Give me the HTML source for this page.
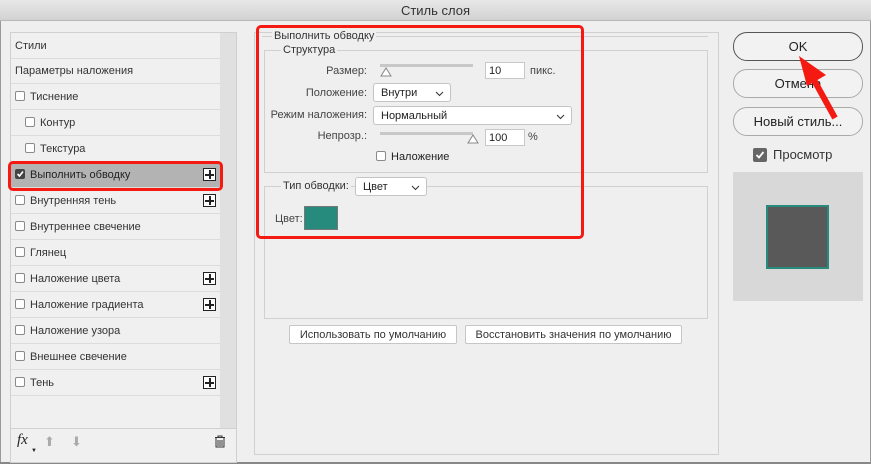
<!DOCTYPE html>
<html><head><meta charset="utf-8"><style>
*{box-sizing:border-box;margin:0;padding:0}
body{width:871px;height:464px;overflow:hidden;background:#efefef;font-family:"Liberation Sans",sans-serif;font-size:11px;color:#222;position:relative}
.a{position:absolute}
.title{left:0;top:0;width:871px;height:21px;background:linear-gradient(#e8e8e8,#d2d2d2);border-bottom:1px solid #b8b8b8;text-align:center;line-height:21px;font-size:13px;color:#333}
.row{position:absolute;left:11px;width:209px;height:26px;border-bottom:1px solid #dcdcdc;line-height:26px;padding-left:4px;color:#333}
.cb{display:inline-block;width:10px;height:10px;border:1px solid #8a8a8a;border-radius:2px;background:#fff;vertical-align:-1px;margin-right:5px;position:relative}
.plus{position:absolute;left:192px;top:6px;width:13px;height:13px;border:1px solid #222;background:#fff}
.plus:before{content:"";position:absolute;left:5px;top:1px;width:1.5px;height:9px;background:#222}
.plus:after{content:"";position:absolute;left:1px;top:5px;width:9px;height:1.5px;background:#222}
.lbl{position:absolute;text-align:right;color:#444}
.inp{position:absolute;background:#fff;border:1px solid #c8c8c8;height:17px;line-height:16px;padding-left:3px}
.sel{position:absolute;background:#fff;border:1px solid #c4c4c4;border-radius:3px;height:19px;line-height:18px;padding-left:7px}
.sel svg{position:absolute;right:6px;top:7px}
.btn{position:absolute;border:1px solid #aaa;border-radius:14px;text-align:center;font-size:13px;line-height:27px;background:#f2f2f2}
.fb{position:absolute;background:#fff;border:1px solid #c6c6c6;border-radius:2px;height:19px;line-height:18px;text-align:center;color:#333}
</style></head><body>
<div class="a title">Стиль слоя</div>
<div class="a" style="left:0;top:21px;width:1px;height:443px;background:#999"></div>
<div class="a" style="left:870px;top:21px;width:1px;height:443px;background:#999"></div>
<div class="a" style="left:0;top:462px;width:871px;height:2px;background:#888"></div>

<div class="a" style="left:10px;top:32px;width:227px;height:431px;border:1px solid #d0d0d0;background:#f0f0f0"></div>
<div class="a" style="left:220px;top:33px;width:16px;height:396px;background:#e0e0e0"></div>
<div class="row" style="top:33px">Стили</div>
<div class="row" style="top:58px">Параметры наложения</div>
<div class="row" style="top:84px"><span class="cb"></span>Тиснение</div>
<div class="row" style="top:110px;padding-left:14px"><span class="cb"></span>Контур</div>
<div class="row" style="top:136px;padding-left:14px"><span class="cb"></span>Текстура</div>
<div class="row" style="top:162px;background:#b3b3b3;color:#222"><span class="cb" style="background:#444;border-color:#444"><svg style="position:absolute;left:0;top:0" width="8" height="8"><path d="M1.5 4L3.5 6L7 1.5" stroke="#fff" stroke-width="1.6" fill="none"/></svg></span>Выполнить обводку<div class="plus"></div></div>
<div class="row" style="top:188px"><span class="cb"></span>Внутренняя тень<div class="plus"></div></div>
<div class="row" style="top:214px"><span class="cb"></span>Внутреннее свечение</div>
<div class="row" style="top:240px"><span class="cb"></span>Глянец</div>
<div class="row" style="top:266px"><span class="cb"></span>Наложение цвета<div class="plus"></div></div>
<div class="row" style="top:292px"><span class="cb"></span>Наложение градиента<div class="plus"></div></div>
<div class="row" style="top:318px"><span class="cb"></span>Наложение узора</div>
<div class="row" style="top:344px"><span class="cb"></span>Внешнее свечение</div>
<div class="row" style="top:370px"><span class="cb"></span>Тень<div class="plus"></div></div>
<div class="a" style="left:11px;top:428px;width:225px;height:1px;background:#d0d0d0"></div>
<div class="a" style="left:17px;top:432px;font-family:'Liberation Serif',serif;font-style:italic;font-size:15px">fx</div>
<div class="a" style="left:31px;top:448px;font-size:6px">▼</div>
<div class="a" style="left:44px;top:434px;color:#aaa;font-size:13px">⬆</div>
<div class="a" style="left:71px;top:434px;color:#aaa;font-size:13px">⬇</div>
<svg class="a" style="left:214px;top:435px" width="12" height="13" viewBox="0 0 12 13"><path d="M1 2.5h10M4 2.5V1h4v1.5M2 3v9h8V3M4 5v6M6 5v6M8 5v6" stroke="#333" fill="none"/></svg>

<div class="a" style="left:254px;top:32px;width:465px;height:423px;border:1px solid #d0d0d0"></div>
<div class="a" style="left:262px;top:36px;width:446px;height:1px;background:#d0d0d0"></div>
<div class="a" style="left:272px;top:30px;background:#efefef;padding:0 2px;color:#333">Выполнить обводку</div>
<div class="a" style="left:264px;top:50px;width:444px;height:123px;border:1px solid #d0d0d0"></div>
<div class="a" style="left:281px;top:44px;background:#efefef;padding:0 2px;color:#333">Структура</div>
<div class="lbl" style="left:270px;top:65px;width:97px">Размер:</div>
<div class="a" style="left:380px;top:64px;width:93px;height:3px;background:#c8c8c8"></div>
<svg class="a" style="left:380px;top:67px" width="12" height="10"><path d="M1 9L6 1L11 9Z" fill="#fff" stroke="#888"/></svg>
<div class="inp" style="left:485px;top:62px;width:40px">10</div>
<div class="a" style="left:530px;top:65px;color:#444">пикс.</div>
<div class="lbl" style="left:270px;top:87px;width:97px">Положение:</div>
<div class="sel" style="left:373px;top:83px;width:78px">Внутри<svg width="9" height="6"><path d="M1 1L4.5 4.5L8 1" stroke="#333" fill="none"/></svg></div>
<div class="lbl" style="left:260px;top:109px;width:107px">Режим наложения:</div>
<div class="sel" style="left:373px;top:106px;width:199px">Нормальный<svg width="9" height="6"><path d="M1 1L4.5 4.5L8 1" stroke="#333" fill="none"/></svg></div>
<div class="lbl" style="left:270px;top:130px;width:97px">Непрозр.:</div>
<div class="a" style="left:380px;top:132px;width:93px;height:3px;background:#c8c8c8"></div>
<svg class="a" style="left:467px;top:134px" width="12" height="10"><path d="M1 9L6 1L11 9Z" fill="#fff" stroke="#888"/></svg>
<div class="inp" style="left:485px;top:129px;width:40px">100</div>
<div class="a" style="left:528px;top:131px;color:#444">%</div>
<div class="a" style="left:376px;top:151px"><span class="cb"></span>Наложение</div>
<div class="a" style="left:264px;top:186px;width:444px;height:133px;border:1px solid #d0d0d0"></div>
<div class="a" style="left:281px;top:180px;background:#efefef;padding:0 2px;color:#333">Тип обводки:</div>
<div class="sel" style="left:355px;top:177px;width:72px">Цвет<svg width="9" height="6"><path d="M1 1L4.5 4.5L8 1" stroke="#333" fill="none"/></svg></div>
<div class="a" style="left:275px;top:213px;color:#444">Цвет:</div>
<div class="a" style="left:304px;top:206px;width:34px;height:24px;background:#268b7d;border:1px solid #777"></div>
<div class="fb" style="left:289px;top:325px;width:168px">Использовать по умолчанию</div>
<div class="fb" style="left:465px;top:325px;width:217px">Восстановить значения по умолчанию</div>
<div class="a" style="left:256px;top:25px;width:328px;height:214px;border:3px solid #f41a12;border-radius:5px"></div>

<div class="btn" style="left:733px;top:32px;width:130px;height:29px;border-color:#555">OK</div>
<div class="btn" style="left:733px;top:69px;width:130px;height:29px">Отмена</div>
<div class="btn" style="left:733px;top:107px;width:130px;height:29px">Новый стиль...</div>
<div class="a" style="left:753px;top:148px;width:14px;height:14px;background:#666;border-radius:2px"><svg style="position:absolute;left:2px;top:2px" width="10" height="10"><path d="M1.5 5L4 7.5L8.5 2" stroke="#fff" stroke-width="1.8" fill="none"/></svg></div>
<div class="a" style="left:773px;top:147px;font-size:13px;color:#333">Просмотр</div>
<div class="a" style="left:733px;top:172px;width:130px;height:129px;background:#d8d8d8"></div>
<div class="a" style="left:766px;top:205px;width:63px;height:64px;background:#595959;border:2px solid #268b7d"></div>

<div class="a" style="left:8px;top:161px;width:215px;height:30px;border:3px solid #f41a12;border-radius:5px"></div>
<svg class="a" style="left:790px;top:50px" width="60" height="75"><path d="M45 68L24 30" stroke="#f41a12" stroke-width="6"/><path d="M9 6L36 25L17 36Z" fill="#f41a12"/></svg>
</body></html>
